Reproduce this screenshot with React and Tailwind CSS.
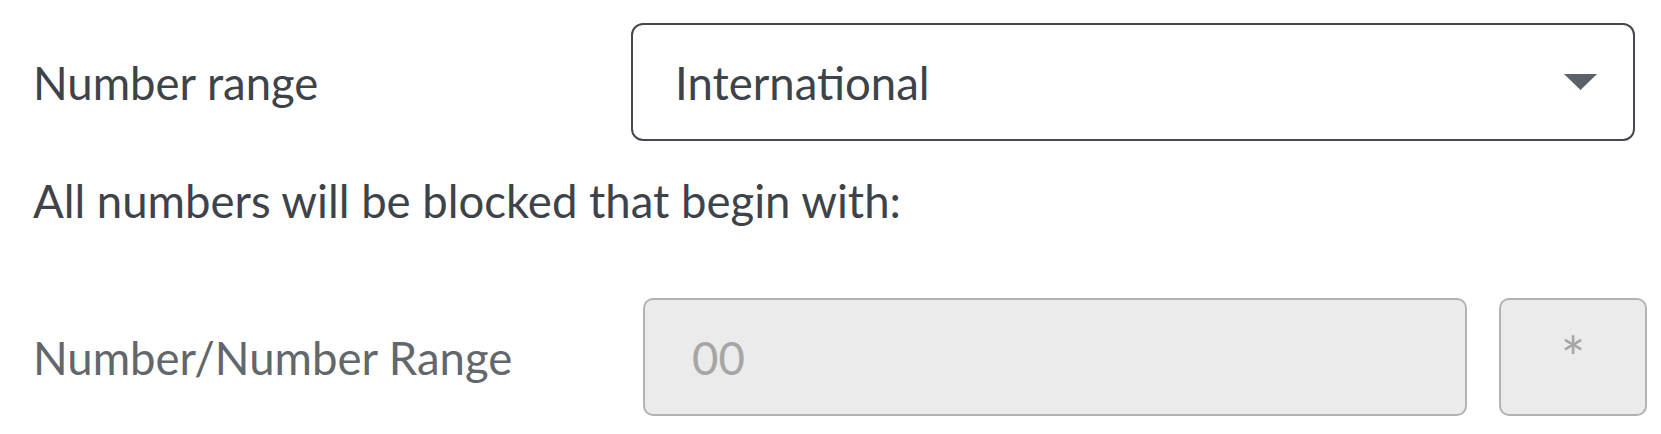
import React from 'react';

const App = () => {
  return (
    <div className="w-[1661px] h-[434px] bg-white pl-[33px] font-['Lato','Open_Sans',sans-serif] text-[#3d4349] overflow-hidden">
      <div className="flex items-center mt-[23px] pr-[26px]">
        <div className="w-[598px] text-[45.5px] pt-[3px]">Number range</div>
        <div className="flex-1 h-[118px] flex items-center justify-between border-2 border-[#45494f] rounded-[12px] pl-[42px] pr-[36px]">
          <span className="text-[45.5px] pt-[3px]">International</span>
          <svg width="33" height="16" viewBox="0 0 33 16">
            <polygon points="0,0 33,0 16.5,16" fill="#5b6169" />
          </svg>
        </div>
      </div>

      <p className="mt-[30px] text-[45.5px] leading-[60px]">All numbers will be blocked that begin with:</p>

      <div className="flex items-center mt-[67px] pr-[14px]">
        <div className="w-[610px] text-[45.5px] pt-[3px] text-[#62676b]">Number/Number Range</div>
        <div className="w-[824px] h-[118px] flex items-center bg-[#ebebeb] border-2 border-[#b3b3b3] rounded-[10px] pl-[47px] pt-[3px] text-[45.5px] text-[#a6a6a6]">
          00
        </div>
        <div className="ml-[32px] w-[148px] h-[118px] flex items-center justify-center bg-[#ebebeb] border-2 border-[#b3b3b3] rounded-[10px] text-[58px] text-[#a6a6a6]">
          <span className="-mt-[2px]">*</span>
        </div>
      </div>
    </div>
  );
};

export default App;
